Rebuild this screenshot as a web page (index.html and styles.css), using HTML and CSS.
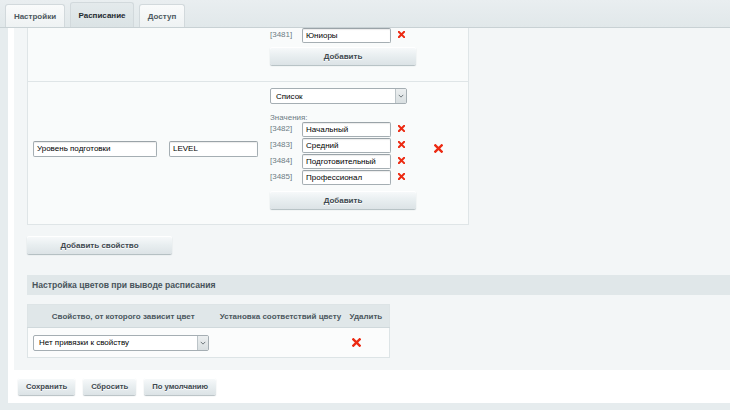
FILE: index.html
```html
<!DOCTYPE html>
<html lang="ru">
<head>
<meta charset="utf-8">
<link rel="stylesheet" href="styles.css">
</head>
<body>
<div class="page">
  <div class="tabs">
    <div class="tab">Настройки</div>
    <div class="tab active">Расписание</div>
    <div class="tab">Доступ</div>
  </div>
  <div class="panel">
    <div class="content">
      <div class="props">
        <div class="prop-row first">
          <div class="c-name"></div>
          <div class="c-code"></div>
          <div class="c-type">
            <div class="val"><span class="vid">[3481]</span><span class="inp inp-val">Юниоры</span><svg class="xs" viewBox="0 0 8 8"><path d="M1 1L7 7M7 1L1 7"/></svg></div>
            <div class="btn btn-add">Добавить</div>
          </div>
          <div class="c-del"></div>
        </div>
        <div class="prop-row">
          <div class="c-name"><span class="inp inp-name">Уровень подготовки</span></div>
          <div class="c-code"><span class="inp inp-code">LEVEL</span></div>
          <div class="c-type">
            <div class="sel sel-type"><span class="sel-text">Список</span><span class="sel-arrow"><svg viewBox="0 0 8 5"><path d="M1 1L4 4L7 1"/></svg></span></div>
            <div class="vals-label">Значения:</div>
            <div class="val"><span class="vid">[3482]</span><span class="inp inp-val">Начальный</span><svg class="xs" viewBox="0 0 8 8"><path d="M1 1L7 7M7 1L1 7"/></svg></div>
            <div class="val"><span class="vid">[3483]</span><span class="inp inp-val">Средний</span><svg class="xs" viewBox="0 0 8 8"><path d="M1 1L7 7M7 1L1 7"/></svg></div>
            <div class="val"><span class="vid">[3484]</span><span class="inp inp-val">Подготовительный</span><svg class="xs" viewBox="0 0 8 8"><path d="M1 1L7 7M7 1L1 7"/></svg></div>
            <div class="val"><span class="vid">[3485]</span><span class="inp inp-val">Профессионал</span><svg class="xs" viewBox="0 0 8 8"><path d="M1 1L7 7M7 1L1 7"/></svg></div>
            <div class="btn btn-add">Добавить</div>
          </div>
          <div class="c-del"><svg class="xl" viewBox="0 0 10 10"><path d="M1.5 1.5L8.5 8.5M8.5 1.5L1.5 8.5"/></svg></div>
        </div>
      </div>
      <div class="btn btn-prop">Добавить свойство</div>
      <div class="section-head">Настройка цветов при выводе расписания</div>
      <table class="colors">
        <thead>
          <tr><th class="col1">Свойство, от которого зависит цвет</th><th class="col2">Установка соответствий цвету</th><th class="col3">Удалить</th></tr>
        </thead>
        <tbody>
          <tr>
            <td class="col1"><div class="sel sel-bind"><span class="sel-text">Нет привязки к свойству</span><span class="sel-arrow"><svg viewBox="0 0 8 5"><path d="M1 1L4 4L7 1"/></svg></span></div></td>
            <td class="col2"></td>
            <td class="col3"><svg class="xm" viewBox="0 0 10 10"><path d="M1.5 1.5L8.5 8.5M8.5 1.5L1.5 8.5"/></svg></td>
          </tr>
        </tbody>
      </table>
    </div>
    <div class="footer">
      <div class="btn btn-foot">Сохранить</div>
      <div class="btn btn-foot">Сбросить</div>
      <div class="btn btn-foot">По умолчанию</div>
    </div>
  </div>
</div>
</body>
</html>
```

FILE: styles.css
```css
html, body {
  margin: 0;
  padding: 0;
}
body {
  background: #e6ecee;
  font-family: "Liberation Sans", Arial, sans-serif;
  font-size: 8px;
  color: #000;
  width: 730px;
  height: 410px;
  overflow: hidden;
}
.page {
  padding-left: 8px;
}
.tabs {
  height: 27px;
  background: linear-gradient(#e9eef0, #e1e8ea);
  border-bottom: 1px solid #c8d1d4;
  margin-left: -8px;
  padding-left: 5px;
  display: flex;
  align-items: flex-end;
  gap: 5px;
}
.tab {
  height: 22px;
  width: 58px;
  display: flex;
  align-items: center;
  justify-content: center;
  background: linear-gradient(#f9fbfb, #eef2f3);
  border: 1px solid #d2d9dc;
  border-bottom: none;
  border-radius: 3px 3px 0 0;
  font-weight: bold;
  color: #4c5860;
  font-size: 8px;
}
.tab.active {
  height: 24px;
  width: 62px;
  background: linear-gradient(#e4eaec, #dbe3e5);
  color: #1f2a30;
}
.tab:last-child {
  width: 44px;
}
.panel {
  background: #fff;
}
.content {
  margin-left: 6px;
  background: #f3f6f7;
  padding: 0 0 12px 13px;
}
.props {
  width: 440px;
  background: #f9fbfb;
  border-left: 1px solid #dfe5e7;
  border-right: 1px solid #dfe5e7;
  border-bottom: 1px solid #dfe5e7;
}
.prop-row {
  display: flex;
  align-items: center;
  padding-left: 5px;
  padding-top: 6px;
  padding-bottom: 15px;
}
.prop-row.first {
  padding-top: 0;
  padding-bottom: 16px;
  border-bottom: 1px solid #dfe5e7;
}
.c-name {
  width: 124px;
  margin-right: 12px;
}
.c-code {
  width: 89px;
  margin-right: 12px;
}
.c-type {
  width: 146px;
  display: flex;
  flex-direction: column;
}
.c-del {
  margin-left: 18px;
  display: flex;
  align-items: center;
}
.inp {
  display: flex;
  align-items: center;
  box-sizing: border-box;
  height: 15px;
  padding: 0 3px;
  background: #fff;
  border: 1px solid #a5aeb3;
  border-top-color: #9aa3a8;
  border-radius: 2px;
  box-shadow: inset 0 1px 1px rgba(0, 0, 0, 0.08);
  font-size: 8px;
  color: #000;
  white-space: nowrap;
  overflow: hidden;
}
.inp-name {
  width: 124px;
  height: 16px;
}
.inp-code {
  width: 89px;
  height: 16px;
}
.inp-val {
  width: 89px;
}
.val {
  display: flex;
  align-items: center;
  height: 15px;
  margin-bottom: 1px;
}
.vid {
  width: 32px;
  color: #6d7c84;
  font-size: 8px;
  position: relative;
  top: -1px;
}
.xs {
  width: 7px;
  height: 7px;
  margin-left: 7px;
  margin-top: -2px;
}
.xs path, .xl path, .xm path {
  stroke: #ec2a12;
  stroke-width: 2.4;
  fill: none;
  stroke-linecap: square;
}
.xl, .xm {
  width: 9px;
  height: 9px;
}
.xl path, .xm path {
  stroke-width: 2.6;
}
.btn {
  display: flex;
  align-items: center;
  justify-content: center;
  box-sizing: border-box;
  height: 18px;
  background: linear-gradient(#f8fafb, #e8eef0 50%, #dce3e6);
  border-radius: 2px;
  box-shadow: 0 1px 1px rgba(90, 110, 120, 0.45), inset 0 1px 0 #fff;
  font-weight: bold;
  font-size: 8px;
  color: #3d484f;
  text-shadow: 0 1px #fff;
}
.btn-add {
  width: 146px;
  margin-top: 5px;
}
.prop-row.first .c-type .btn-add {
  margin-top: 3px;
}
.sel {
  display: flex;
  box-sizing: border-box;
  height: 16px;
  background: #fff;
  border: 1px solid #a5aeb3;
  border-radius: 2px;
  overflow: hidden;
}
.sel-type {
  width: 137px;
}
.sel-bind {
  width: 176px;
}
.sel-text {
  flex: 1;
  display: flex;
  align-items: center;
  padding-left: 5px;
  font-size: 8px;
}
.sel-arrow {
  width: 10px;
  background: linear-gradient(#eceff0, #d9dfe1);
  border-left: 1px solid #bcc4c8;
  display: flex;
  align-items: center;
  justify-content: center;
}
.sel-arrow svg {
  width: 6px;
  height: 4px;
}
.sel-arrow path {
  stroke: #6b7479;
  stroke-width: 1.3;
  fill: none;
}
.vals-label {
  color: #6d7c84;
  font-size: 8px;
  margin-top: 10px;
  height: 8px;
  line-height: 8px;
}
.btn-prop {
  width: 145px;
  margin-top: 11px;
}
.section-head {
  margin-top: 21px;
  height: 20px;
  background: #e0e7e9;
  display: flex;
  align-items: center;
  padding-left: 5px;
  font-weight: bold;
  font-size: 8.6px;
  color: #48545b;
}
.colors {
  margin-top: 9px;
  border-collapse: collapse;
  width: 363px;
  border: 1px solid #dde4e6;
}
.colors th {
  height: 22px;
  background: #e0e7e9;
  font-weight: bold;
  font-size: 8px;
  color: #4b575e;
  padding: 0;
  text-align: center;
  white-space: nowrap;
  border-bottom: 1px solid #d0d9dc;
}
.colors td {
  height: 29px;
  background: #fbfcfc;
  padding: 0;
}
.colors .col1 {
  width: 188px;
}
.colors td.col1 {
  padding-left: 5px;
}
.colors .col2 {
  width: 125px;
}
.colors .col3 {
  width: 50px;
}
.colors td.col3 {
  text-align: center;
}
.colors td.col3 svg {
  display: inline-block;
  vertical-align: middle;
  margin-left: -18px;
}
.footer {
  height: 33px;
  display: flex;
  align-items: center;
  gap: 8px;
  padding-left: 10px;
}
.btn-foot {
  height: 17px;
  padding: 0 8px;
  font-size: 7.7px;
}
```
